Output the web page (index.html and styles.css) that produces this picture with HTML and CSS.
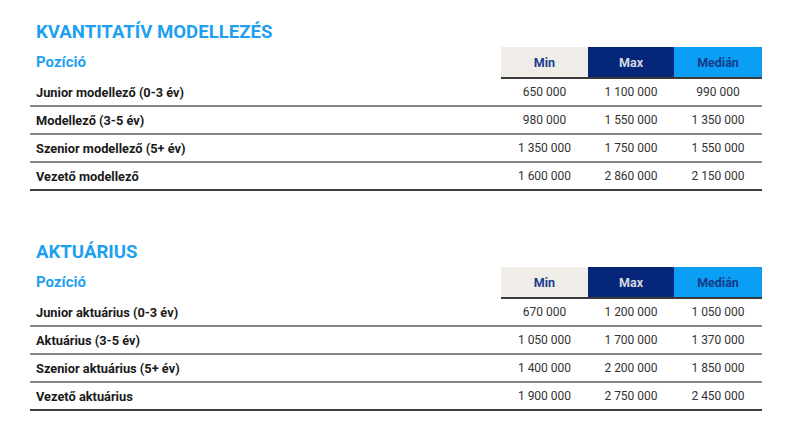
FILE: index.html
```html
<!DOCTYPE html>
<html lang="hu">
<head>
<meta charset="utf-8">
<link rel="stylesheet" href="styles.css">
</head>
<body>
<div class="page">
  <section class="block">
    <h2 class="title">KVANTITATÍV MODELLEZÉS</h2>
    <table class="salary">
      <thead>
        <tr>
          <th class="pos">Pozíció</th>
          <th class="min">Min</th>
          <th class="max">Max</th>
          <th class="med">Medián</th>
        </tr>
      </thead>
      <tbody>
        <tr><td class="label">Junior modellező (0-3 év)</td><td>650 000</td><td>1 100 000</td><td>990 000</td></tr>
        <tr><td class="label">Modellező (3-5 év)</td><td>980 000</td><td>1 550 000</td><td>1 350 000</td></tr>
        <tr><td class="label">Szenior modellező (5+ év)</td><td>1 350 000</td><td>1 750 000</td><td>1 550 000</td></tr>
        <tr class="last"><td class="label">Vezető modellező</td><td>1 600 000</td><td>2 860 000</td><td>2 150 000</td></tr>
      </tbody>
    </table>
  </section>
  <section class="block second">
    <h2 class="title">AKTUÁRIUS</h2>
    <table class="salary">
      <thead>
        <tr>
          <th class="pos">Pozíció</th>
          <th class="min">Min</th>
          <th class="max">Max</th>
          <th class="med">Medián</th>
        </tr>
      </thead>
      <tbody>
        <tr><td class="label">Junior aktuárius (0-3 év)</td><td>670 000</td><td>1 200 000</td><td>1 050 000</td></tr>
        <tr><td class="label">Aktuárius (3-5 év)</td><td>1 050 000</td><td>1 700 000</td><td>1 370 000</td></tr>
        <tr><td class="label">Szenior aktuárius (5+ év)</td><td>1 400 000</td><td>2 200 000</td><td>1 850 000</td></tr>
        <tr class="last"><td class="label">Vezető aktuárius</td><td>1 900 000</td><td>2 750 000</td><td>2 450 000</td></tr>
      </tbody>
    </table>
  </section>
</div>
</body>
</html>
```
FILE: styles.css
```css
html, body {
  margin: 0;
  padding: 0;
  background: #ffffff;
}
body {
  font-family: Roboto, "Liberation Sans", sans-serif;
  color: #1c1c1c;
}
.page {
  padding: 21px 38px 0 30px;
}
.block.second {
  margin-top: 50px;
}
.title {
  margin: 0 0 4px 6px;
  font-size: 18.6px;
  line-height: 22px;
  font-weight: 700;
  color: #1e9ff0;
}
.salary {
  width: 732px;
  border-collapse: collapse;
  table-layout: fixed;
}
.salary th {
  height: 30px;
  padding: 0;
  font-size: 12.5px;
  font-weight: 700;
  border-bottom: 2px solid #3a3a3a;
  text-align: center;
}
.salary th.pos {
  width: 465px;
  text-align: left;
  padding-left: 6px;
  font-size: 15px;
  color: #1e9ff0;
  border-bottom-color: #ffffff;
}
.salary th.min {
  width: 87px;
  background: #f0ede8;
  color: #1d3c8e;
}
.salary th.max {
  width: 86px;
  background: #06267a;
  color: #d4d8e4;
}
.salary th.med {
  width: 88px;
  background: #0a9ff5;
  color: #163a8a;
}
.salary td {
  height: 26px;
  padding: 0;
  font-size: 12px;
  text-align: center;
  color: #333333;
  border-bottom: 2px solid #858585;
}
.salary td.label {
  text-align: left;
  padding-left: 6px;
  font-size: 12.8px;
  font-weight: 700;
  color: #1a1a1a;
}
.salary tr.last td {
  border-bottom-color: #3e3e3e;
}
```
